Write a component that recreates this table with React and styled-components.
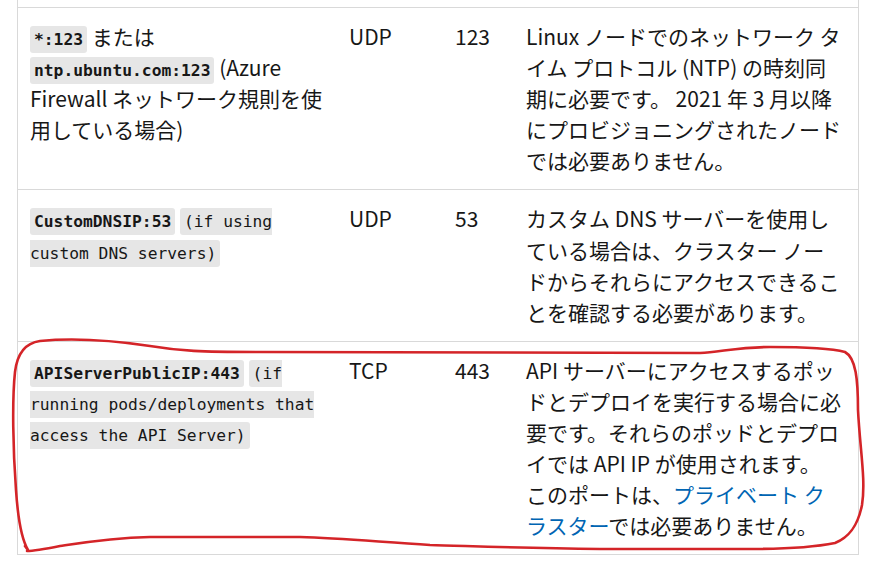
import React from "react";
import styled, { createGlobalStyle } from "styled-components";

const Global = createGlobalStyle`
  html, body { margin: 0; padding: 0; background: #ffffff; }
  body { font-family: "Noto Sans CJK JP", "Noto Sans", sans-serif; color: #171717; }
`;

const Page = styled.div`
  position: relative;
  width: 871px;
  height: 565px;
  overflow: hidden;
  padding-left: 17px;
  box-sizing: border-box;
`;

const Table = styled.div`
  width: 842px;
  box-sizing: border-box;
  border-left: 1px solid #d9d9d9;
  border-right: 1px solid #d9d9d9;
  border-bottom: 1px solid #d9d9d9;
`;

const Spacer = styled.div`
  height: 7px;
`;

const Row = styled.div`
  display: grid;
  grid-template-columns: 319px 106px 71px 344px;
  border-top: 1px solid #d9d9d9;
`;

const Cell = styled.div`
  padding: 13px ${(p) => (p.$wide ? "15px" : "12px")} 13px 12px;
  font-size: 21px;
  line-height: 31.1px;
  color: #171717;
  line-break: strict;
`;

const Code = styled.code`
  font-family: "DejaVu Sans Mono", "Liberation Mono", monospace;
  font-size: 16.3px;
  line-height: 1;
  font-weight: ${(p) => (p.$bold ? 700 : 400)};
  background: #e6e6e6;
  color: #171717;
  padding: 4px 4px;
  border-radius: 3px;
`;

const Phrase = styled.span`
  white-space: nowrap;
`;

const Link = styled.a`
  color: #0065b3;
  text-decoration: none;
`;

const Overlay = styled.svg`
  position: absolute;
  left: 0;
  top: 0;
  pointer-events: none;
`;

export default function App() {
  return (
    <>
      <Global />
      <Page>
        <Table>
          <Spacer />
          <Row>
            <Cell>
              <Code $bold>*:123</Code> または <Code $bold>ntp.ubuntu.com:123</Code> (Azure Firewall ネットワーク規則を使用している場合)
            </Cell>
            <Cell>UDP</Cell>
            <Cell>123</Cell>
            <Cell $wide>
              Linux ノードでのネットワーク タイム プロトコル (NTP) の時刻同期に必要です。 2021 年 3 月以降にプロビジョニングされたノードでは必要ありません。
            </Cell>
          </Row>
          <Row>
            <Cell>
              <Code $bold>CustomDNSIP:53</Code> <Code>(if using custom DNS servers)</Code>
            </Cell>
            <Cell>UDP</Cell>
            <Cell>53</Cell>
            <Cell $wide>
              カスタム DNS サーバーを使用している場合は、クラスター ノードからそれらにアクセスできることを確認する必要があります。
            </Cell>
          </Row>
          <Row>
            <Cell>
              <Code $bold>APIServerPublicIP:443</Code> <Code>(if running pods/deployments that access the API Server)</Code>
            </Cell>
            <Cell>TCP</Cell>
            <Cell>443</Cell>
            <Cell $wide>
              API サーバーにアクセスするポッドとデプロイを実行する場合に必要です。それらのポッドとデプロイでは API IP が使用されます。<Phrase>このポートは、</Phrase><Link href="#">プライベート クラスター</Link>では必要ありません。
            </Cell>
          </Row>
        </Table>
        <Overlay width="871" height="565" viewBox="0 0 871 565">
          <path
            d="M 25,546 C 27,549 29,551 28,550 C 22,540 18,520 16,490 C 13,450 12,400 15,372 C 17,355 25,343 40,341 C 70,338 110,340 150,346 C 180,351 200,352 260,352 L 700,353 C 720,352 740,347 770,347 C 800,347 830,348 845,352 C 856,358 858,380 858,410 C 860,450 866,480 862,505 C 858,525 850,537 835,543 C 810,548 780,549 750,549 L 600,549 C 520,548 470,546 430,545 C 380,542 340,538 300,537 L 150,537 C 110,538 80,543 60,546 C 45,549 35,551 27,551"
            fill="none"
            stroke="#d42428"
            strokeWidth="2.6"
            strokeLinecap="round"
            strokeLinejoin="round"
          />
        </Overlay>
      </Page>
    </>
  );
}
